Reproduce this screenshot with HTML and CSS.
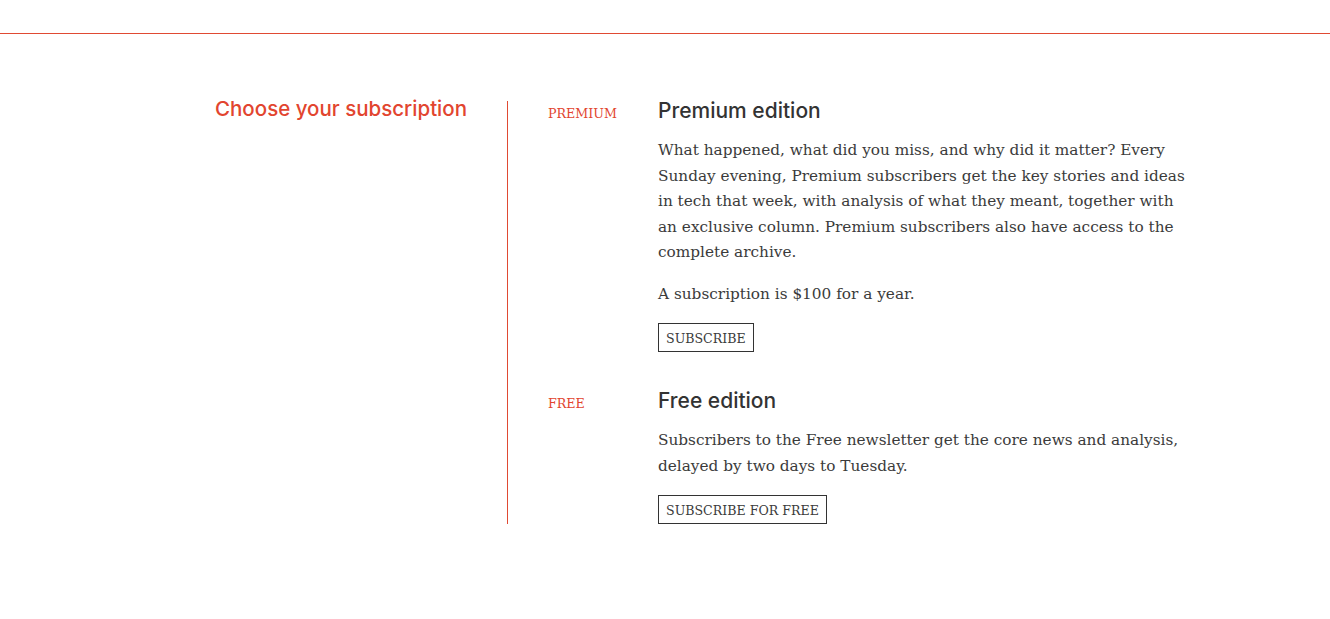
FILE: index.html
```html
<!DOCTYPE html>
<html>
<head>
<meta charset="utf-8">
<link rel="stylesheet" href="styles.css">
</head>
<body>
<header class="topbar"></header>
<main class="page">
  <aside class="side">
    <h1 class="side-title">Choose your subscription</h1>
  </aside>
  <section class="plans">
    <article class="plan">
      <div class="plan-label">PREMIUM</div>
      <div class="plan-body">
        <h2 class="plan-title">Premium edition</h2>
        <p class="plan-text">What happened, what did you miss, and why did it matter? Every Sunday evening, Premium subscribers get the key stories and ideas in tech that week, with analysis of what they meant, together with an exclusive column. Premium subscribers also have access to the complete archive.</p>
        <p class="plan-text">A subscription is $100 for a year.</p>
        <a class="btn" href="#">SUBSCRIBE</a>
      </div>
    </article>
    <article class="plan">
      <div class="plan-label">FREE</div>
      <div class="plan-body">
        <h2 class="plan-title">Free edition</h2>
        <p class="plan-text">Subscribers to the Free newsletter get the core news and analysis, delayed by two days to Tuesday.</p>
        <a class="btn" href="#">SUBSCRIBE FOR FREE</a>
      </div>
    </article>
  </section>
</main>
</body>
</html>
```

FILE: styles.css
```css
html, body {
  margin: 0;
  padding: 0;
  background: #fff;
}
body {
  color: #3b3b3b;
  font-family: "DejaVu Serif", serif;
}
.topbar {
  height: 33px;
  border-bottom: 1px solid #e04a33;
}
.page {
  display: flex;
  align-items: flex-start;
  padding-left: 215px;
  padding-top: 67px;
}
.side {
  width: 292px;
  box-sizing: border-box;
  padding-right: 30px;
}
.side-title {
  margin: 0;
  font-family: "Inter", "Roboto", sans-serif;
  font-weight: 500;
  font-size: 20.5px;
  line-height: 16px;
  color: #e2452f;
  white-space: nowrap;
}
.plans {
  border-left: 1px solid #e04a33;
  padding-left: 40px;
  display: flex;
  flex-direction: column;
  gap: 39px;
}
.plan {
  display: flex;
}
.plan-label {
  width: 110px;
  flex: none;
  font-size: 12.7px;
  color: #e2452f;
  padding-top: 5px;
}
.plan-body {
  width: 530px;
  display: flex;
  flex-direction: column;
  align-items: flex-start;
}
.plan-title {
  margin: 0 0 17px;
  font-family: "Inter", "Roboto", sans-serif;
  font-weight: 500;
  font-size: 21px;
  line-height: 20px;
  color: #333;
}
.plan-text {
  margin: 0 0 16px;
  font-size: 15.3px;
  line-height: 25.5px;
}
.btn {
  display: block;
  border: 1px solid #333;
  padding: 7px 7px 5px;
  font-size: 12.6px;
  line-height: 15px;
  color: #3b3b3b;
  text-decoration: none;
}
```
